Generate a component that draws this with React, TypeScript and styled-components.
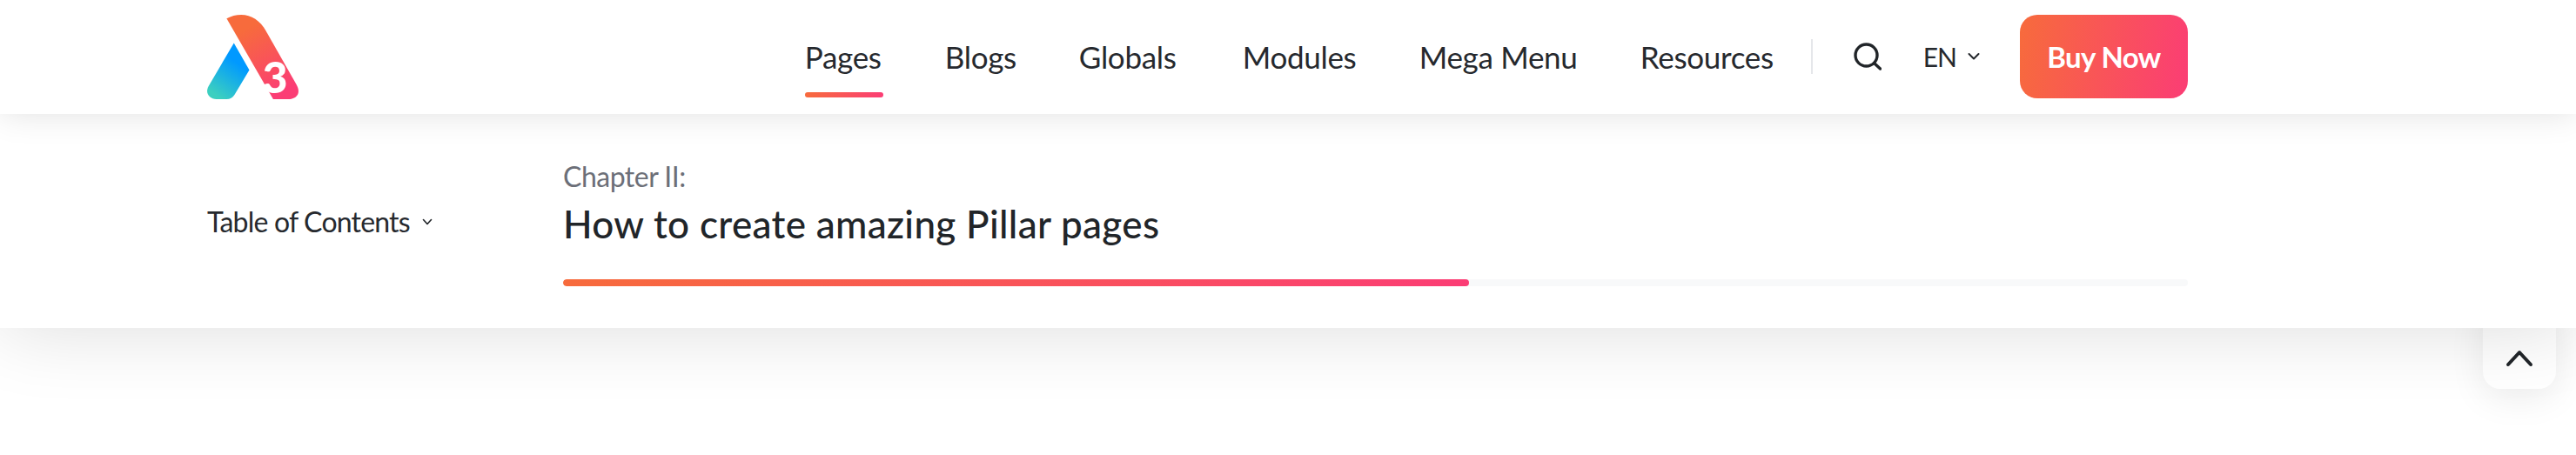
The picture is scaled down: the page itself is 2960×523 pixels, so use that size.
import styled, { createGlobalStyle } from "styled-components";

const GlobalStyle = createGlobalStyle`
  html, body {
    margin: 0;
    padding: 0;
    background: #fff;
    overflow: hidden;
  }
  body {
    font-family: "Lato", "Open Sans", sans-serif;
    color: #212529;
  }
  * { box-sizing: border-box; }
`;

const brand = "linear-gradient(100deg, #f76b3c 0%, #fb3d75 100%)";

const Page = styled.div`
  position: relative;
  width: 2960px;
  height: 523px;
  overflow: hidden;
`;

const Header = styled.header`
  position: relative;
  z-index: 3;
  height: 131px;
  padding: 17px 446px 0 238px;
  background: #fff;
  box-shadow: 0 0 36px rgba(0, 0, 0, 0.12);
  display: flex;
  justify-content: space-between;
  align-items: flex-start;
`;

const Logo = styled.svg`
  display: block;
  width: 105px;
  height: 97px;
  overflow: visible;
`;

const RightSide = styled.div`
  display: flex;
  align-items: center;
  height: 96px;
`;

const Nav = styled.nav`
  display: flex;
  gap: 71px;
  margin-right: 41px;
`;

const NavItem = styled.a<{ $active?: boolean; $width: number; $spacing: number }>`
  position: relative;
  display: block;
  width: ${(p) => p.$width}px;
  font-size: 35px;
  line-height: 44px;
  letter-spacing: ${(p) => p.$spacing}px;
  white-space: nowrap;
  color: #26292e;

  ${(p) =>
    p.$active &&
    `
    &::after {
      content: "";
      position: absolute;
      left: 0;
      right: 0;
      bottom: -25px;
      height: 6px;
      border-radius: 3px;
      background: ${brand};
    }
  `}
`;

const Divider = styled.span`
  width: 2px;
  height: 40px;
  background: #e5e7ea;
  margin-right: 47px;
`;

const SearchIcon = styled.svg`
  display: block;
  width: 32px;
  height: 32px;
  margin-right: 48px;
`;

const Lang = styled.div`
  display: flex;
  align-items: center;
  gap: 12px;
  font-size: 30px;
  margin-right: 45px;
  letter-spacing: -1px;
  color: #26292e;
`;

const Caret = styled.svg<{ $size: number }>`
  display: block;
  width: ${(p) => p.$size}px;
  height: ${(p) => p.$size}px;
`;

const BuyButton = styled.a`
  display: flex;
  align-items: center;
  justify-content: center;
  width: 193px;
  height: 96px;
  border-radius: 20px;
  background: ${brand};
  color: #fff;
  font-size: 33px;
  font-weight: 700;
  letter-spacing: -0.6px;
`;

const ChapterBar = styled.section`
  position: relative;
  z-index: 2;
  height: 246px;
  padding: 0 446px 0 238px;
  background: #fff;
  box-shadow: 0 0 90px rgba(0, 0, 0, 0.14);
  display: flex;
  align-items: flex-start;
`;

const TocToggle = styled.div`
  width: 409px;
  margin-top: 104px;
  display: flex;
  align-items: center;
  gap: 14px;
  font-size: 32px;
  line-height: 40px;
  letter-spacing: -0.8px;
  color: #26292e;
`;

const ChapterInfo = styled.div`
  flex: 1;
  padding-top: 52px;
`;

const ChapterLabel = styled.div`
  font-size: 32px;
  line-height: 40px;
  letter-spacing: -0.5px;
  color: #6c6f78;
`;

const ChapterTitle = styled.h2`
  margin: 8px 0 0;
  font-size: 44px;
  line-height: 52px;
  font-weight: 500;
  letter-spacing: 0.33px;
  color: #212529;
`;

const Track = styled.div`
  margin-top: 38px;
  height: 8px;
  border-radius: 4px;
  background: #f8f9fa;
  overflow: hidden;
`;

const Fill = styled.div`
  height: 100%;
  border-radius: 4px;
  background: ${brand};
`;

const BackToTop = styled.button`
  position: absolute;
  z-index: 1;
  left: 2853px;
  top: 340px;
  width: 84px;
  height: 107px;
  padding: 36px 0 0;
  border: 0;
  border-radius: 20px;
  background: #fff;
  box-shadow: 0 10px 40px rgba(0, 0, 0, 0.08);
  display: flex;
  justify-content: center;
  align-items: center;
`;

const navItems = [
  { label: "Pages", width: 90, spacing: -0.3, active: true },
  { label: "Blogs", width: 83, spacing: -0.3 },
  { label: "Globals", width: 117, spacing: -0.3 },
  { label: "Modules", width: 132, spacing: -0.3 },
  { label: "Mega Menu", width: 183, spacing: -0.3 },
  { label: "Resources", width: 155, spacing: -0.3 },
];

export default function App() {
  return (
    <Page>
      <GlobalStyle />
      <Header>
        <Logo viewBox="113 50 314 290">
          <defs>
            <linearGradient id="warm" x1="0.3" y1="0.1" x2="0.7" y2="0.95">
              <stop offset="0.05" stopColor="#f76b3c" />
              <stop offset="1" stopColor="#fb3d75" />
            </linearGradient>
            <linearGradient id="cool" x1="0.7" y1="0.35" x2="0.35" y2="1">
              <stop offset="0" stopColor="#0099ff" />
              <stop offset="1" stopColor="#3bcfc0" />
            </linearGradient>
          </defs>
          <path
            d="M180 63C196 54 212 50 230 50C265 50 295 70 315 105L420 290C438 322 418 340 393 340H340L180 63Z"
            fill="url(#warm)"
          />
          <path
            d="M205 147L258 240L207 325C200 335 192 340 180 340H145C120 340 105 318 118 295L205 147Z"
            fill="url(#cool)"
          />
          <text
            x="303"
            y="318"
            fontFamily="Lato, sans-serif"
            fontWeight="900"
            fontSize="150"
            fill="#fff"
          >
            3
          </text>
        </Logo>
        <RightSide>
          <Nav>
            {navItems.map((item) => (
              <NavItem
                key={item.label}
                $active={item.active}
                $width={item.width}
                $spacing={item.spacing}
              >
                {item.label}
              </NavItem>
            ))}
          </Nav>
          <Divider />
          <SearchIcon viewBox="0 0 32 32" fill="none" stroke="#212529" strokeWidth="3.4" strokeLinecap="round">
            <circle cx="14.5" cy="14.5" r="12.5" />
            <path d="M24 24L30.5 30" />
          </SearchIcon>
          <Lang>
            EN
            <Caret $size={16} viewBox="0 0 16 16" fill="none" stroke="#212529" strokeWidth="2" strokeLinecap="round" strokeLinejoin="round">
              <path d="M2.5 5L8 10.5L13.5 5" />
            </Caret>
          </Lang>
          <BuyButton>Buy Now</BuyButton>
        </RightSide>
      </Header>
      <ChapterBar>
        <TocToggle>
          Table of Contents
          <Caret $size={12} viewBox="0 0 12 12" fill="none" stroke="#212529" strokeWidth="1.6" strokeLinecap="round" strokeLinejoin="round">
            <path d="M1.5 3.5L6 8.5L10.5 3.5" />
          </Caret>
        </TocToggle>
        <ChapterInfo>
          <ChapterLabel>Chapter II:</ChapterLabel>
          <ChapterTitle>How to create amazing Pillar pages</ChapterTitle>
          <Track>
            <Fill style={{ width: `${(1041 / 1867) * 100}%` }} />
          </Track>
        </ChapterInfo>
      </ChapterBar>
      <BackToTop aria-label="Back to top">
        <Caret $size={32} viewBox="0 0 32 32" fill="none" stroke="#212529" strokeWidth="4" strokeLinecap="round" strokeLinejoin="round">
          <path d="M3 23L16 9L29 23" />
        </Caret>
      </BackToTop>
    </Page>
  );
}
